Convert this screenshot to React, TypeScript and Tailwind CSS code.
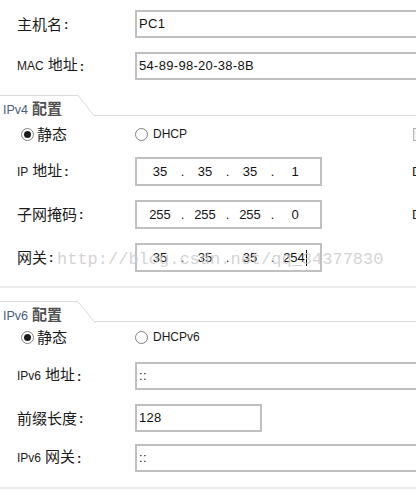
import type { ReactNode } from "react";

const sans = "font-['Liberation_Sans','Noto_Sans_CJK_SC',sans-serif]";

function Cjk({ children }: { children: ReactNode }) {
  return <span className="text-[15px] leading-none">{children}</span>;
}

function Colon() {
  return <span className="ml-[2px] text-[13px] font-bold leading-none">:</span>;
}

function Radio({ on }: { on?: boolean }) {
  return (
    <span className="flex h-[13px] w-[13px] shrink-0 items-center justify-center rounded-full border border-[#7f7f7f] bg-white">
      {on && <span className="h-[7px] w-[7px] rounded-full bg-[#1c1c1c]" />}
    </span>
  );
}

function Tab({ ver }: { ver: string }) {
  return (
    <div className="flex h-[21px]">
      <div className="flex w-[78px] shrink-0 items-end border-t border-[#dadada] pl-[3px]">
        <span className="text-[12.5px] leading-none text-[#4a5d80]">IPv{ver}</span>
        <span className="ml-[4px] text-[15px] font-bold leading-none text-[#505050]">配置</span>
      </div>
      <svg width="16" height="21" className="shrink-0">
        <line x1="0" y1="0.5" x2="16" y2="20.5" stroke="#dadada" />
      </svg>
      <div className="flex-1 border-b border-[#dadada]" />
    </div>
  );
}

function Row({ label, children, className }: { label: ReactNode; children: ReactNode; className: string }) {
  return (
    <div className={`flex items-center ${className}`}>
      <div className="flex w-[135px] shrink-0 items-center pl-[17px] text-[12px] text-[#1a1a1a]">{label}</div>
      {children}
    </div>
  );
}

function Field({ text, w }: { text: string; w: string }) {
  return (
    <div className={`flex h-[28px] shrink-0 items-center border-2 border-[#c0c0c0] bg-white px-[2px] text-[13px] tracking-[0.3px] text-[#111] ${w}`}>
      {text}
    </div>
  );
}

function IpField({ parts, cursor }: { parts: string[]; cursor?: boolean }) {
  return (
    <div className="flex h-[29px] w-[187px] shrink-0 items-center border-2 border-[#c0c0c0] bg-white pl-[5px] text-[13px] text-[#111]">
      {parts.map((p, i) => (
        <div key={i} className="flex items-center">
          {i > 0 && <span className="w-[9px] text-center">.</span>}
          <span className="flex w-[36px] items-center justify-center">
            {p}
            {cursor && i === 3 && <span className="ml-[1px] inline-block h-[16px] w-px bg-black" />}
          </span>
        </div>
      ))}
    </div>
  );
}

export default function App() {
  return (
    <div className={`relative h-[504px] w-[416px] overflow-hidden bg-white pt-[10px] ${sans}`}>
      <Row className="h-[28px]" label={<><Cjk>主机名</Cjk><Colon /></>}>
        <Field text="PC1" w="w-[300px]" />
      </Row>
      <Row className="mt-[14px] h-[28px]" label={<><span>MAC</span><span className="ml-[4px]"><Cjk>地址</Cjk></span><Colon /></>}>
        <Field text="54-89-98-20-38-8B" w="w-[300px]" />
      </Row>

      <div className="mt-[15px]">
        <Tab ver="4" />
      </div>

      <div className="mt-[11px] flex h-[14px] items-center pl-[21px] text-[12px] text-[#1a1a1a]">
        <div className="flex w-[114px] shrink-0 items-center gap-[3px]">
          <Radio on />
          <Cjk>静态</Cjk>
        </div>
        <div className="flex w-[278px] shrink-0 items-center gap-[5px]">
          <Radio />
          <span>DHCP</span>
        </div>
        <span className="h-[13px] w-[13px] shrink-0 border border-[#b4b4b4] bg-[#f2f2f2]" />
      </div>

      <Row className="mt-[16px] h-[29px]" label={<><span>IP</span><span className="ml-[4px]"><Cjk>地址</Cjk></span><Colon /></>}>
        <IpField parts={["35", "35", "35", "1"]} />
        <span className="ml-[90px] shrink-0 text-[13px] text-[#1a1a1a]">D</span>
      </Row>
      <Row className="mt-[14px] h-[29px]" label={<><Cjk>子网掩码</Cjk><Colon /></>}>
        <IpField parts={["255", "255", "255", "0"]} />
        <span className="ml-[90px] shrink-0 text-[13px] text-[#1a1a1a]">D</span>
      </Row>
      <Row className="mt-[14px] h-[29px]" label={<><Cjk>网关</Cjk><Colon /></>}>
        <IpField parts={["35", "35", "35", "254"]} cursor />
      </Row>

      <div className="mt-[14px] h-[2px] bg-[#ebebeb]" />

      <div className="mt-[13px]">
        <Tab ver="6" />
      </div>

      <div className="mt-[8px] flex h-[14px] items-center pl-[21px] text-[12px] text-[#1a1a1a]">
        <div className="flex w-[114px] shrink-0 items-center gap-[3px]">
          <Radio on />
          <Cjk>静态</Cjk>
        </div>
        <div className="flex items-center gap-[5px]">
          <Radio />
          <span>DHCPv6</span>
        </div>
      </div>

      <Row className="mt-[18px] h-[28px]" label={<><span>IPv6</span><span className="ml-[4px]"><Cjk>地址</Cjk></span><Colon /></>}>
        <Field text="::" w="w-[300px]" />
      </Row>
      <Row className="mt-[14px] h-[28px]" label={<><Cjk>前缀长度</Cjk><Colon /></>}>
        <Field text="128" w="w-[127px]" />
      </Row>
      <Row className="mt-[12px] h-[28px]" label={<><span>IPv6</span><span className="ml-[4px]"><Cjk>网关</Cjk></span><Colon /></>}>
        <Field text="::" w="w-[300px]" />
      </Row>

      <div className="mt-[15px] h-[2px] bg-[#ebebeb]" />

      <div className="pointer-events-none absolute left-[57px] top-[251px] font-['Liberation_Mono',monospace] text-[17px] leading-none text-[#c8c8c8]/80">
        http://blog.csdn.net/qq_34377830
      </div>
    </div>
  );
}
